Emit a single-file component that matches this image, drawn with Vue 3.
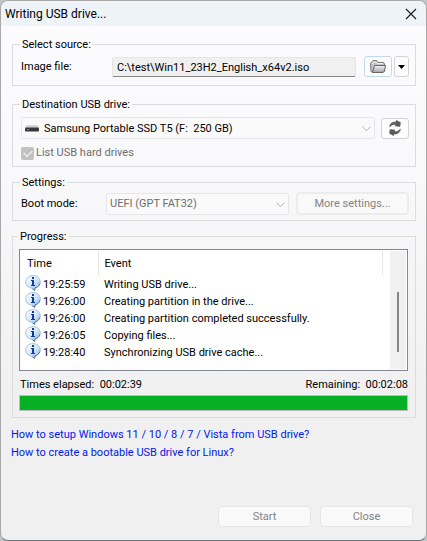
<script setup>
import { ref } from 'vue'

const imagePath = ref('C:\\test\\Win11_23H2_English_x64v2.iso')
const listHardDrives = ref(true)
const progress = ref(100)

const events = [
  { time: '19:25:59', text: 'Writing USB drive...' },
  { time: '19:26:00', text: 'Creating partition in the drive...' },
  { time: '19:26:00', text: 'Creating partition completed successfully.' },
  { time: '19:26:05', text: 'Copying files...' },
  { time: '19:28:40', text: 'Synchronizing USB drive cache...' }
]
</script>

<template>
  <main class="window">
    <header class="titlebar">
      <h1>Writing USB drive...</h1>
      <button class="close" type="button" aria-label="Close window">
        <svg width="12" height="12" viewBox="0 0 12 12"><path d="M1 1l10 10M11 1L1 11" stroke="#1a1a1a" stroke-width="1.1" fill="none" /></svg>
      </button>
    </header>

    <div class="body">
      <fieldset class="source">
        <legend>Select source:</legend>
        <div class="row">
          <label for="image" class="image-label">Image file:</label>
          <input id="image" v-model="imagePath" class="path" type="text" readonly />
          <button class="tool browse" type="button" aria-label="Browse">
            <svg width="18" height="16" viewBox="0 0 18 16">
              <defs>
                <linearGradient id="folder" x1="0" y1="0" x2="0" y2="1">
                  <stop offset="0" stop-color="#f4f4f4" /><stop offset="1" stop-color="#a2a2a2" />
                </linearGradient>
              </defs>
              <path d="M2 12.500L1.500 4.500L3 2.500L4.500 1.500H7.500L9 3.500H14.500L15.500 5V12L14 13.500H4z" fill="#c4c4c4" stroke="#777" />
              <path d="M3 4.500L5 3H7L8.500 4.500H14" fill="none" stroke="#f2f2f2" />
              <path d="M3.500 13.500L5.500 6.500H16.500L15.500 12L14 13.500z" fill="url(#folder)" stroke="#666" />
            </svg>
          </button>
          <button class="tool more" type="button" aria-label="Recent images">
            <svg width="7" height="4" viewBox="0 0 7 4"><path d="M0 0H7L3.500 4z" fill="#000" /></svg>
          </button>
        </div>
      </fieldset>

      <fieldset class="destination">
        <legend>Destination USB drive:</legend>
        <div class="row">
          <div class="combo drive">
            <svg class="disk" width="14" height="7" viewBox="0 0 14 7">
              <path d="M2 0H12L14 3H0z" fill="#d3d3d6" />
              <rect y="2.500" width="14" height="4" rx="1" fill="#37383b" />
              <rect x="2" y="4" width="2" height="1" fill="#27d03b" />
            </svg>
            <select aria-label="Destination USB drive" disabled>
              <option>Samsung Portable SSD T5 (F:&nbsp; 250 GB)</option>
            </select>
            <svg class="chevron" width="9" height="6" viewBox="0 0 9 6"><path d="M.5 .7L4.500 4.700L8.500 .7" /></svg>
          </div>
          <button class="tool refresh" type="button" aria-label="Refresh drives">
            <svg width="14" height="16" viewBox="0 0 14 16" fill="#5c5c5c" stroke="#484848" stroke-width=".4">
              <path d="M1.500 7C1.800 3.500 4.500 1.500 8 2L8.300 .3L12.500 2.500L12 6.500L7 6L7.800 4.600C5.500 4 3.500 5 1.500 7z" />
              <path d="M12.500 9C12.200 12.500 9.500 14.500 6 14L5.700 15.700L1.500 13.500L2 9.500L7 10L6.200 11.400C8.500 12 10.500 11 12.500 9z" />
            </svg>
          </button>
        </div>
        <label class="check">
          <input v-model="listHardDrives" type="checkbox" disabled />
          <span>List USB hard drives</span>
        </label>
      </fieldset>

      <fieldset class="settings">
        <legend>Settings:</legend>
        <div class="row">
          <label for="boot" class="boot-label">Boot mode:</label>
          <div class="combo boot">
            <select id="boot" disabled>
              <option>UEFI (GPT FAT32)</option>
            </select>
            <svg class="chevron" width="9" height="6" viewBox="0 0 9 6"><path d="M.5 .7L4.500 4.700L8.500 .7" /></svg>
          </div>
          <button class="push settings-button" type="button" disabled>More settings...</button>
        </div>
      </fieldset>

      <fieldset class="progress-group">
        <legend>Progress:</legend>
        <div class="log">
          <table>
            <thead>
              <tr><th class="time">Time</th><th>Event</th></tr>
            </thead>
            <tbody>
              <tr v-for="(event, i) in events" :key="i">
                <td class="time">
                  <span class="stamp">
                    <svg width="16" height="16" viewBox="0 0 16 16">
                      <defs>
                        <linearGradient :id="`bubble${i}`" x1="0" y1="0" x2="1" y2="1">
                          <stop offset="0" stop-color="#fff" /><stop offset=".5" stop-color="#d5e8fa" /><stop offset="1" stop-color="#83b2e4" />
                        </linearGradient>
                      </defs>
                      <path d="M8 .6C12.200 .6 15.300 3.200 15.300 6.900C15.300 10 13 12 10 12.900L9.500 15.300L6.600 13.200C3 12.800 .7 10.300 .7 6.900C.7 3.200 3.800 .6 8 .6z" :fill="`url(#bubble${i})`" stroke="#a3bdd8" stroke-width=".9" />
                      <path d="M14.800 8.500C14 11 12.300 12.300 10 12.900L9.500 15.300L7.500 13.800" fill="none" stroke="#416a99" stroke-width=".9" />
                      <path d="M7 2H9V4H7zM6 5H9V10H10V11H6V10H7V6H6z" fill="#123c9c" />
                    </svg>
                    {{ event.time }}
                  </span>
                </td>
                <td>{{ event.text }}</td>
              </tr>
            </tbody>
          </table>
          <div class="scrollbar"><span class="thumb"></span></div>
        </div>
        <div class="times">
          <span>Times elapsed:&nbsp; 00:02:39</span>
          <span>Remaining:&nbsp; 00:02:08</span>
        </div>
        <div class="bar" role="progressbar" aria-label="Progress" :aria-valuenow="progress">
          <div class="fill" :style="{ width: progress + '%' }"></div>
        </div>
      </fieldset>

      <nav class="links">
        <a href="#windows">How to setup Windows 11 / 10 / 8 / 7 / Vista from USB drive?</a>
        <a href="#linux">How to create a bootable USB drive for Linux?</a>
      </nav>
    </div>

    <footer class="actions">
      <button class="push" type="button" disabled>Start</button>
      <button class="push" type="button" disabled>Close</button>
    </footer>
  </main>
</template>

<style>
body {
  background: #c2c4c6;
}
</style>

<style scoped>
* {
  box-sizing: border-box;
}

.window {
  display: flex;
  flex-direction: column;
  min-height: 100vh;
  border: 1px solid #a8a8a8;
  border-bottom-color: #707274;
  border-radius: 8px;
  overflow: hidden;
  background: linear-gradient(#fbfafd 10%, #f9f9fb 30%, #f0f0f0 75%);
  color: #000;
  font: 11px/16px Roboto, "Noto Sans", sans-serif;
}

button,
input,
select {
  font: inherit;
  color: inherit;
}

.titlebar {
  display: flex;
  align-items: center;
  justify-content: space-between;
  height: 25px;
  padding: 0 9px 0 4px;
  background: #eef3f8;
}

h1 {
  margin: 0;
  font: 12px/16px Roboto, "Open Sans", sans-serif;
}

.close {
  display: flex;
  padding: 0;
  border: 0;
  background: none;
}

.body {
  display: flex;
  flex-direction: column;
  flex: 1;
  padding: 10px 10px 0 11px;
}

fieldset {
  min-width: 0;
  margin: 0;
  padding: 0 7px;
  border: 1px solid #dcdcdc;
}

legend {
  margin-left: -1px;
  padding: 2px 2px 0;
  line-height: 14px;
}

.row {
  display: flex;
  align-items: center;
}

.source {
  padding: 4px 6px 8px 8px;
}

.image-label {
  width: 91px;
}

.path {
  flex: 1;
  min-width: 0;
  height: 20px;
  padding: 1px 4px 0;
  border: 1px solid #e5e5e5;
  border-bottom-color: #868686;
  border-radius: 2px;
  background: #f0f0f0;
}

.tool {
  display: flex;
  align-items: center;
  justify-content: center;
  height: 21px;
  padding: 0;
  border: 1px solid #d4d4d6;
  border-radius: 3px;
  background: #fdfdfd;
}

.browse {
  width: 28px;
  margin-left: 8px;
  border-color: #c3d8ea;
}

.more {
  width: 15px;
  margin-left: 2px;
}

.refresh {
  width: 28px;
  margin-left: 6px;
}

.destination {
  margin-top: 10px;
  padding: 5px 6px 5px 8px;
}

.combo {
  position: relative;
  flex: 1;
  min-width: 0;
}

.combo select {
  display: block;
  width: 100%;
  height: 22px;
  padding: 1px 20px 0 3px;
  border: 1px solid #e6e6e8;
  border-radius: 2px;
  background: #fafafa;
  appearance: none;
  opacity: 1;
  color: #6d6d6d;
}

.drive select {
  padding-left: 22px;
  color: #000;
}

.disk {
  position: absolute;
  top: 8px;
  left: 4px;
}

.chevron {
  position: absolute;
  top: 9px;
  right: 4px;
  fill: none;
  stroke: #b0b0b0;
}

.check {
  display: flex;
  align-items: center;
  gap: 2px;
  margin-top: 6px;
  color: #6d6d6d;
}

.check input {
  display: grid;
  place-items: center;
  width: 13px;
  height: 13px;
  margin: 0;
  border-radius: 2px;
  background: #c2c2c2;
  appearance: none;
}

.check input:checked::after {
  content: "";
  width: 7px;
  height: 4px;
  margin-top: -2px;
  border: solid #fff;
  border-width: 0 0 1px 1px;
  transform: rotate(-45deg);
}

.settings {
  margin-top: 7px;
  padding: 2px 6px 5px 8px;
}

.boot-label {
  width: 85px;
}

.push {
  flex: none;
  width: 93px;
  height: 21px;
  padding: 1px 0 0;
  border: 1px solid #e6e6e6;
  border-radius: 4px;
  background: #f9f9f9;
  color: #838383;
}

.settings-button {
  width: 113px;
  height: 23px;
  margin-left: 7px;
  border-width: 2px;
  border-color: #ececec;
}

.progress-group {
  margin-top: 7px;
  padding: 5px 7px 6px 6px;
}

.log {
  display: flex;
  justify-content: space-between;
  height: 122px;
  padding: 1px;
  border: 1px solid #828790;
  background: #fff;
}

table {
  flex: 1;
  border-collapse: collapse;
  align-self: flex-start;
}

th {
  height: 24px;
  padding: 2px 0 0 6px;
  border-right: 1px solid #e5e5e5;
  font-weight: 400;
  text-align: left;
}

td {
  height: 17px;
  padding: 2px 0 0 6px;
  line-height: 15px;
}

.time {
  width: 77px;
}

td.time {
  padding-left: 4px;
}

.stamp {
  display: flex;
  gap: 2px;
  height: 15px;
}

.stamp svg {
  margin-top: -2px;
}

.scrollbar {
  display: flex;
  justify-content: center;
  width: 16px;
  margin-left: 7px;
  padding-top: 41px;
  background: #f0f0f0;
}

.thumb {
  width: 2px;
  height: 60px;
  background: #858585;
}

.times {
  display: flex;
  justify-content: space-between;
  margin: 6px 0 2px;
  padding-left: 1px;
}

.bar {
  height: 16px;
  border: 1px solid #bcbcbc;
  background: #e6e6e6;
}

.fill {
  height: 100%;
  background: #06b025;
}

.links {
  display: flex;
  flex-direction: column;
  align-items: flex-start;
  gap: 2px;
  margin-top: 9px;
}

.links a {
  margin-left: -1px;
  color: #0018f0;
  text-decoration: none;
}

.actions {
  display: flex;
  justify-content: flex-end;
  gap: 9px;
  padding: 0 13px 13px;
}
</style>
